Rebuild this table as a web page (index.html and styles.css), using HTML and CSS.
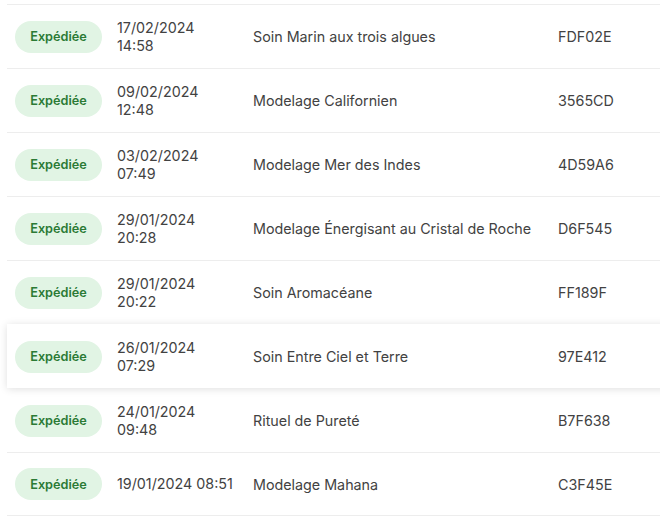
FILE: index.html
```html
<!DOCTYPE html>
<html lang="fr">
<head>
<meta charset="utf-8">
<link rel="stylesheet" href="styles.css">
</head>
<body>
<div class="list">
  <div class="row"><div class="cell"><span class="badge">Expédiée</span></div><div class="date">17/02/2024<br>14:58</div><div class="name">Soin Marin aux trois algues</div><div class="code">FDF02E</div></div>
  <div class="row"><div class="cell"><span class="badge">Expédiée</span></div><div class="date">09/02/2024<br>12:48</div><div class="name">Modelage Californien</div><div class="code">3565CD</div></div>
  <div class="row"><div class="cell"><span class="badge">Expédiée</span></div><div class="date">03/02/2024<br>07:49</div><div class="name">Modelage Mer des Indes</div><div class="code">4D59A6</div></div>
  <div class="row"><div class="cell"><span class="badge">Expédiée</span></div><div class="date">29/01/2024<br>20:28</div><div class="name">Modelage Énergisant au Cristal de Roche</div><div class="code">D6F545</div></div>
  <div class="row"><div class="cell"><span class="badge">Expédiée</span></div><div class="date">29/01/2024<br>20:22</div><div class="name">Soin Aromacéane</div><div class="code">FF189F</div></div>
  <div class="row hover"><div class="cell"><span class="badge">Expédiée</span></div><div class="date">26/01/2024<br>07:29</div><div class="name">Soin Entre Ciel et Terre</div><div class="code">97E412</div></div>
  <div class="row"><div class="cell"><span class="badge">Expédiée</span></div><div class="date">24/01/2024<br>09:48</div><div class="name">Rituel de Pureté</div><div class="code">B7F638</div></div>
  <div class="row last"><div class="cell"><span class="badge">Expédiée</span></div><div class="date">19/01/2024 08:51</div><div class="name">Modelage Mahana</div><div class="code">C3F45E</div></div>
</div>
</body>
</html>
```
FILE: styles.css
```css
html, body {
  margin: 0;
  padding: 0;
  background: #fff;
  overflow: hidden;
}
body {
  font-family: Inter, "Liberation Sans", sans-serif;
  font-size: 14.3px;
  color: #424242;
}
.list {
  margin: 4px 0 0 7px;
  width: 680px;
}
.row {
  display: grid;
  grid-template-columns: 102px 136px 305px 1fr;
  align-items: center;
  height: 64px;
  box-sizing: border-box;
  padding-left: 8px;
  border-top: 1px solid #ededed;
}
.row.last {
  border-bottom: 1px solid #ededed;
}
.row.hover {
  background: #fff;
  border-top-color: transparent;
  box-shadow: 0 1px 8px rgba(0, 0, 0, 0.13);
  position: relative;
}
.row.hover + .row {
  border-top-color: transparent;
}
.cell {
  display: flex;
  align-items: center;
}
.badge {
  display: inline-flex;
  align-items: center;
  justify-content: center;
  width: 87px;
  height: 32px;
  border-radius: 16px;
  background: #e1f4e4;
  color: #2b7a35;
  font-weight: 600;
  font-size: 12.7px;
}
.date {
  line-height: 18px;
  white-space: nowrap;
}
.name, .code {
  white-space: nowrap;
}
```
